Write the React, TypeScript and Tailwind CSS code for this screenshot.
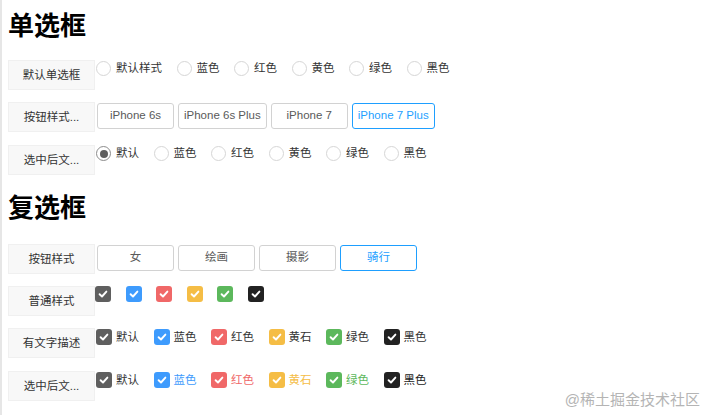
import React from "react"

const colors = [
    { name: "默认", bg: "bg-[#5f5f5f]", text: "text-[#333333]" },
    { name: "蓝色", bg: "bg-[#3e9bfd]", text: "text-[#3e9bfd]" },
    { name: "红色", bg: "bg-[#f06868]", text: "text-[#f06868]" },
    { name: "黄石", bg: "bg-[#f5bd45]", text: "text-[#f5bd45]" },
    { name: "绿色", bg: "bg-[#5cb85c]", text: "text-[#5cb85c]" },
    { name: "黑色", bg: "bg-[#222222]", text: "text-[#222222]" },
]

function Label({ children }: { children: React.ReactNode }) {
    return (
        <div className="w-[87px] h-[30px] shrink-0 bg-[#f8f8f8] border border-[#f0f0f0] px-[10px] text-center leading-[28px] text-[#333] whitespace-nowrap">
            {children}
        </div>
    )
}

function Radio({ checked = false }: { checked?: boolean }) {
    return (
        <span
            className={
                checked
                    ? "w-[15px] h-[15px] shrink-0 rounded-full border border-[#8c8c8c] bg-white flex items-center justify-center"
                    : "w-[15px] h-[15px] shrink-0 rounded-full border border-[#d6d6d6] bg-white flex items-center justify-center"
            }
        >
            {checked && <span className="w-[8px] h-[8px] rounded-full bg-[#5f5f5f]" />}
        </span>
    )
}

function Check({ bg }: { bg: string }) {
    return (
        <span className={`w-[16px] h-[16px] shrink-0 rounded-[3px] flex items-center justify-center ${bg}`}>
            <svg width="10" height="10" viewBox="0 0 10 10" fill="none">
                <path d="M1.6 5.2 L4 7.5 L8.4 2.6" stroke="white" strokeWidth="1.9" strokeLinecap="round" strokeLinejoin="round" />
            </svg>
        </span>
    )
}

function RadioRow({ items, checkedFirst = false }: { items: string[]; checkedFirst?: boolean }) {
    return (
        <div className="flex items-center ml-[1px] mt-[1px] h-[15px]">
            {items.map((t, i) => (
                <label key={t} className="flex items-center mr-[14.5px]">
                    <Radio checked={checkedFirst && i === 0} />
                    <span className="ml-[5px] leading-[15px]">{t}</span>
                </label>
            ))}
        </div>
    )
}

function ButtonGroup({ items, active, fixed = false }: { items: string[]; active: number; fixed?: boolean }) {
    return (
        <div className="flex gap-[4px] ml-[2px] mt-[1px]">
            {items.map((t, i) => (
                <button
                    key={t}
                    className={[
                        "h-[26px] rounded-[3px] border bg-white px-[5px] min-w-[77px]",
                        fixed ? "w-[77px]" : "",
                        i === active ? "border-[#1e9fff] text-[#1e9fff]" : "border-[#d2d2d2] text-[#5a5a5a]",
                    ].join(" ")}
                >
                    {t}
                </button>
            ))}
        </div>
    )
}

export default function App() {
    const radioNames = ["默认样式", "蓝色", "红色", "黄色", "绿色", "黑色"]
    const radioNames2 = ["默认", "蓝色", "红色", "黄色", "绿色", "黑色"]

    return (
        <div
            className="relative w-full h-[415px] overflow-hidden bg-white border-l-2 border-[#e6e6e6] pl-[6px] pt-[11px] text-[11.5px] text-[#333]"
            style={{ fontFamily: '"Liberation Sans", "Noto Sans CJK SC", sans-serif' }}
        >
            <h2 className="text-[26px] leading-[30px] font-bold text-black">单选框</h2>

            <div className="flex mt-[19px]">
                <Label>默认单选框</Label>
                <RadioRow items={radioNames} />
            </div>

            <div className="flex mt-[12px]">
                <Label>按钮样式...</Label>
                <ButtonGroup items={["iPhone 6s", "iPhone 6s Plus", "iPhone 7", "iPhone 7 Plus"]} active={3} />
            </div>

            <div className="flex mt-[13px]">
                <Label>选中后文...</Label>
                <RadioRow items={radioNames2} checkedFirst />
            </div>

            <h2 className="text-[26px] leading-[30px] font-bold text-black mt-[18px]">复选框</h2>

            <div className="flex mt-[21px]">
                <Label>按钮样式</Label>
                <ButtonGroup items={["女", "绘画", "摄影", "骑行"]} active={3} fixed />
            </div>

            <div className="flex mt-[12px]">
                <Label>普通样式</Label>
                <div className="flex gap-[14.5px]">
                    {colors.map((c) => (
                        <Check key={c.name} bg={c.bg} />
                    ))}
                </div>
            </div>

            <div className="flex mt-[12px]">
                <Label>有文字描述</Label>
                <div className="flex items-center ml-[1px] mt-[1px] h-[16px]">
                    {colors.map((c) => (
                        <label key={c.name} className="flex items-center mr-[14.5px]">
                            <Check bg={c.bg} />
                            <span className="ml-[4px] leading-[16px]">{c.name}</span>
                        </label>
                    ))}
                </div>
            </div>

            <div className="flex mt-[13px]">
                <Label>选中后文...</Label>
                <div className="flex items-center ml-[1px] mt-[1px] h-[16px]">
                    {colors.map((c) => (
                        <label key={c.name} className="flex items-center mr-[14.5px]">
                            <Check bg={c.bg} />
                            <span className={`ml-[4px] leading-[16px] ${c.text}`}>{c.name}</span>
                        </label>
                    ))}
                </div>
            </div>

            <div className="absolute right-[6px] bottom-[6px] text-[15px] leading-[18px] text-[#b4b4b4]">
                @稀土掘金技术社区
            </div>
        </div>
    )
}
